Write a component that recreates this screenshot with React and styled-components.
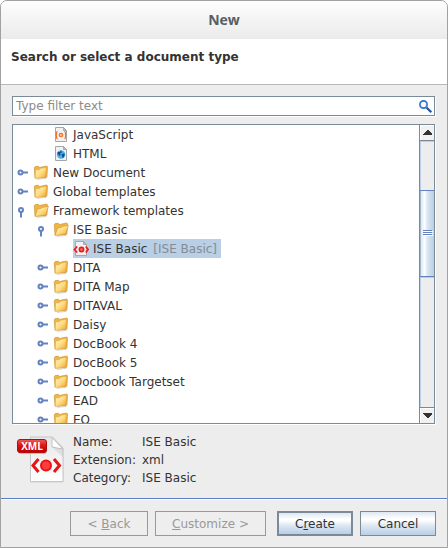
import React from "react";
import styled, { createGlobalStyle, css } from "styled-components";

const Global = createGlobalStyle`
  * { box-sizing: border-box; }
  body { margin: 0; background: #fff; }
  body, button, input { font-family: "DejaVu Sans", sans-serif; font-size: 12px; color: #333; }
`;

const Dialog = styled.main`
  display: flex;
  flex-direction: column;
  height: 100vh;
  min-height: 400px;
  border: 1px solid #a1a1a1;
  border-radius: 7px 7px 0 0;
  background: #ededed;
  overflow: hidden;
`;

const TitleBar = styled.header`
  flex: none;
  height: 38px;
  line-height: 38px;
  text-align: center;
  font-family: "Open Sans", sans-serif;
  font-size: 14px;
  font-weight: 700;
  color: #555f64;
  background: linear-gradient(#fdfdfd, #ebebeb);
`;

const Heading = styled.h1`
  flex: none;
  height: 46px;
  margin: 0;
  padding: 9px 10px;
  font-size: 12px;
  line-height: 18px;
  font-weight: 700;
  background: #fff;
  border-bottom: 1px solid #b8b8b8;
`;

const Content = styled.section`
  flex: 1;
  min-height: 0;
  display: flex;
  flex-direction: column;
  gap: 8px;
  padding: 11px 12px 12px 11px;
`;

const SearchField = styled.label`
  flex: none;
  display: flex;
  align-items: center;
  height: 20px;
  padding: 0 1px 0 3px;
  background: #fff;
  border: 1px solid #7a8a99;
  box-shadow: 1px 1px #fff;
`;

const SearchInput = styled.input`
  flex: 1;
  min-width: 0;
  height: 18px;
  padding: 0;
  border: 0;
  outline: 0;
  background: transparent;
  &::placeholder { color: #8b8b8b; opacity: 1; }
`;

const TreePane = styled.div`
  flex: 1;
  min-height: 0;
  display: flex;
  background: #fff;
  border: 1px solid #7a8a99;
  box-shadow: 1px 1px #fff;
`;

const Tree = styled.ul`
  flex: 1;
  min-width: 0;
  margin: 0;
  padding: 0;
  list-style: none;
  overflow: hidden;
`;

const Row = styled.li`
  display: flex;
  align-items: center;
  height: 19px;
  padding-left: ${(p) => 4 + p.$level * 20}px;
`;

const Toggle = styled.button`
  flex: none;
  width: 12px;
  height: 19px;
  margin-right: 4px;
  padding: 0;
  border: 0;
  background: none;
  visibility: ${(p) => (p.$hidden ? "hidden" : "visible")};
  svg { display: block; }
`;

const Item = styled.span`
  display: flex;
  align-items: center;
  gap: 4px;
  height: 19px;
  padding-right: 4px;
  white-space: pre;
  ${(p) => p.$selected && css`background: #b8cfe5;`}
`;

const Origin = styled.span`
  margin-left: 2px;
  color: #858c94;
`;

const ScrollBar = styled.div`
  flex: none;
  display: flex;
  flex-direction: column;
  width: 15px;
  border-left: 1px solid #7a8a99;
  background: #ededed;
`;

const Arrow = styled.button`
  flex: none;
  display: flex;
  align-items: center;
  justify-content: center;
  height: 16px;
  padding: 0;
  border: 0;
  background: #f1f1f1;
  box-shadow: inset 1px 1px #fff;
  border-${(p) => (p.$end ? "top" : "bottom")}: 1px solid #7a8a99;
`;

const Track = styled.div`
  flex: 1;
  display: grid;
  grid-template-rows: 49fr 86fr 130fr;
  box-shadow: inset 1px 1px #b8cfe5;
`;

const Thumb = styled.div`
  grid-row: 2;
  display: flex;
  align-items: center;
  justify-content: center;
  border: solid #6382bf;
  border-width: 1px 0;
  box-shadow: inset 1px 0 #a3b8cc, 0 1px #b8cfe5;
  background: linear-gradient(90deg, #d3e2f0, #fff 35%, #dce8f3 50%, #b8cfe5);
`;

const Details = styled.section`
  flex: none;
  display: flex;
  gap: 7px;
  height: 62px;
  padding-left: 16px;
`;

const Facts = styled.dl`
  display: grid;
  grid-template-columns: 69px auto;
  grid-auto-rows: 18px;
  margin: -3px 0 0;
  line-height: 18px;
  white-space: nowrap;
  dt, dd { margin: 0; }
`;

const Footer = styled.footer`
  flex: none;
  display: flex;
  justify-content: flex-end;
  gap: 7px;
  padding: 12px 11px 11px;
  border-top: 1px solid #5b80c4;
  box-shadow: inset 0 1px #fff;
`;

const Button = styled.button`
  height: 25px;
  width: ${(p) => (p.$wide ? 111 : p.$medium ? 78 : 76)}px;
  padding: 0;
  white-space: nowrap;
  border: ${(p) => (p.$primary ? 2 : 1)}px solid #7a8a99;
  background: linear-gradient(#dde8f3, #fff 30%, #fff 35%, #dce7f2 60%, #b8cfe5);
  margin-left: ${(p) => (p.$primary ? 4 : 0)}px;
  &:disabled { color: #999; background: #eee; border-color: #999; }
`;

function ToggleIcon({ open }) {
  return (
    <svg width="12" height="19" viewBox="0 0 12 19" aria-hidden="true">
      <g transform={open ? "translate(-2 2) rotate(90 6 9.5)" : undefined}>
        <path d="M5 9.5h6" stroke="#6382bf" strokeWidth="2" />
        <circle cx="3.5" cy="9.5" r="2" fill="#fff" stroke="#6382bf" strokeWidth="2" />
      </g>
    </svg>
  );
}

function FolderIcon({ open }) {
  return (
    <svg width="16" height="16" viewBox="0 0 16 16" aria-hidden="true">
      <defs>
        <linearGradient id="folderFill" x1="0" y1="0" x2="1" y2="1">
          <stop stopColor="#fff6c8" /><stop offset=".5" stopColor="#fede85" /><stop offset="1" stopColor="#eda233" />
        </linearGradient>
      </defs>
      <path d="M4 14.4 13 13.4l1.5-2" stroke="#aaa" strokeWidth="1" fill="none" opacity=".5" />
      <path d="M2 13 1.3 2.6 2.2 1.6l3.2-.3 1 1.2L13.6 1l.9.7L14 11l-1 1.5z" fill="#f0b545" stroke="#c98a22" strokeWidth=".6" />
      {open
        ? <path d="M2 13.4 4.6 6 8 5.4l1-.9 6.4-1.2-2.6 9z" fill="url(#folderFill)" stroke="#d2932b" strokeWidth=".6" />
        : <path d="M2.2 13.4 2.6 5l4-.4 1-1.3 5.7-1-.7 10z" fill="url(#folderFill)" stroke="#dda03a" strokeWidth=".5" />}
    </svg>
  );
}

function FileIcon({ kind }) {
  return (
    <svg width="16" height="17" viewBox="0 0 16 17" aria-hidden="true">
      <path d="M2.5 1.5h8l3 3v11h-11z" fill="#f1f1f1" stroke="#a6a6a6" />
      <path d="M10.5 1.5v3h3z" fill="#bcbcbc" stroke="#999" strokeWidth=".7" />
      {kind === "js" && (
        <g fill="none" stroke="#ef6a23" strokeWidth="1.1">
          <path d="M4.7 5.5q-1.4 0-1.1 2 .1 1.4-.9 1.6 1 .2.9 1.7-.3 2 1.1 2M11.3 5.5q1.4 0 1.1 2-.1 1.4.9 1.6-1 .2-.9 1.7.3 2-1.1 2" />
          <circle cx="8" cy="9" r="1.8" fill="#f9b58c" />
        </g>
      )}
      {kind === "html" && (
        <>
          <circle cx="8" cy="9.5" r="4.2" fill="#45b2e8" />
          <path d="M4.2 8q2-3 4-2.2L9 7.5 7 8.2l.7 1.5L6.5 11zM8.5 9l3-.5q.8 2-1.3 4.2-1.8 0-1-1.9z" fill="#124e91" />
          <path d="M5 6.7 7 5.6l.3 1z" fill="#cdf2ff" />
        </>
      )}
      {kind === "xml" && (
        <g fill="none" stroke="#e81c1c" strokeWidth="1.7">
          <path d="M4.2 6.5 1.5 9.5l2.7 3M12.8 6.5l2.3 3-2.3 3" />
          <circle cx="8.5" cy="9.5" r="2.1" fill="#f77" />
        </g>
      )}
    </svg>
  );
}

function SearchIcon() {
  return (
    <svg width="15" height="16" viewBox="0 0 15 16" aria-hidden="true">
      <path d="m8.5 9.5 4.8 4.8" stroke="#2656a0" strokeWidth="2.3" />
      <circle cx="5.5" cy="6.5" r="3.6" fill="#f2f8ff" stroke="#2d76c6" strokeWidth="1.7" />
    </svg>
  );
}

function ArrowIcon({ down }) {
  return (
    <svg width="9" height="5" viewBox="0 0 9 5" aria-hidden="true">
      <path d={down ? "M0 0h9v1L5 5H4L0 1z" : "M0 5h9V4L5 0H4L0 4z"} fill="#333" shapeRendering="crispEdges" />
    </svg>
  );
}

function GripIcon() {
  return (
    <svg width="11" height="7" viewBox="0 0 11 7" aria-hidden="true" shapeRendering="crispEdges">
      <path d="M2 1.5h9M2 3.5h9M2 5.5h9" stroke="#fff" />
      <path d="M1 .5h9M1 2.5h9M1 4.5h9" stroke="#6382bf" />
    </svg>
  );
}

function XmlBadge() {
  return (
    <svg width="49" height="49" viewBox="0 0 49 49" role="img" aria-label="XML file">
      <defs>
        <linearGradient id="sheet" x1="0" y1="0" x2="0" y2="1"><stop stopColor="#e7e7e7" /><stop offset="1" stopColor="#fff" /></linearGradient>
        <linearGradient id="tag" x1="0" y1="0" x2="0" y2="1"><stop stopColor="#f05a5a" /><stop offset=".45" stopColor="#dc1616" /><stop offset="1" stopColor="#b80000" /></linearGradient>
      </defs>
      <path d="M13.5 1.5h22L46.5 13v33.5h-33z" fill="#bbb" opacity=".5" />
      <path d="M13.5 1h22l10.5 11v33.5H13.5z" fill="url(#sheet)" stroke="#c7c7c7" />
      <path d="M35 1.5 45.8 13 35 11z" fill="#fff" stroke="#b5b5b5" strokeWidth=".8" />
      <path d="M35 11 46 13v8z" fill="#aaa" opacity=".25" />
      <rect x="1" y="5" width="29" height="13" rx="3" fill="#777" opacity=".4" />
      <rect x="0.5" y="3.5" width="29" height="13" rx="2.5" fill="url(#tag)" stroke="#b40d0d" />
      <text x="15" y="13.5" textAnchor="middle" fontFamily="Open Sans, sans-serif" fontSize="10" fontWeight="700" fill="#fff">XML</text>
      <g fill="none" stroke="#e81414" strokeWidth="3">
        <path d="m21.5 23-5.5 6.5 5.5 6.5M37 23l5.5 6.5L37 36" />
        <circle cx="29" cy="29.5" r="5" fill="#ff3c3c" strokeWidth="2" />
      </g>
    </svg>
  );
}

const items = [
  { label: "JavaScript", level: 1, file: "js" },
  { label: "HTML", level: 1, file: "html" },
  { label: "New Document", level: 0 },
  { label: "Global templates", level: 0 },
  { label: "Framework templates", level: 0, open: true },
  { label: "ISE Basic", level: 1, open: true },
  { label: "ISE Basic", level: 2, file: "xml", origin: "[ISE Basic]" },
  ...["DITA", "DITA Map", "DITAVAL", "Daisy", "DocBook 4", "DocBook 5", "Docbook Targetset", "EAD", "EO"].map(
    (label) => ({ label, level: 1 })
  ),
];

export default function App() {
  return (
    <>
      <Global />
      <Dialog role="dialog" aria-labelledby="title">
        <TitleBar id="title">New</TitleBar>
        <Heading>Search or select a document type</Heading>
        <Content>
          <SearchField>
            <SearchInput type="text" placeholder="Type filter text" aria-label="Type filter text" />
            <SearchIcon />
          </SearchField>
          <TreePane>
            <Tree role="tree">
              {items.map((item, i) => (
                <Row key={i} $level={item.level} role="treeitem" aria-level={item.level + 1} aria-selected={!!item.origin}>
                  <Toggle type="button" $hidden={!!item.file} aria-label={`Toggle ${item.label}`}>
                    <ToggleIcon open={item.open} />
                  </Toggle>
                  <Item $selected={!!item.origin}>
                    {item.file ? <FileIcon kind={item.file} /> : <FolderIcon open={item.open} />}
                    <span>{item.label}</span>
                    {item.origin && <Origin>{item.origin}</Origin>}
                  </Item>
                </Row>
              ))}
            </Tree>
            <ScrollBar>
              <Arrow type="button" aria-label="Scroll up"><ArrowIcon /></Arrow>
              <Track><Thumb><GripIcon /></Thumb></Track>
              <Arrow type="button" $end aria-label="Scroll down"><ArrowIcon down /></Arrow>
            </ScrollBar>
          </TreePane>
        </Content>
        <Details>
          <XmlBadge />
          <Facts>
            <dt>Name:</dt><dd>ISE Basic</dd>
            <dt>Extension:</dt><dd>xml</dd>
            <dt>Category:</dt><dd>ISE Basic</dd>
          </Facts>
        </Details>
        <Footer>
          <Button type="button" disabled $medium>&lt; <u>B</u>ack</Button>
          <Button type="button" disabled $wide><u>C</u>ustomize &gt;</Button>
          <Button type="button" $primary>C<u>r</u>eate</Button>
          <Button type="button">Cancel</Button>
        </Footer>
      </Dialog>
    </>
  );
}
